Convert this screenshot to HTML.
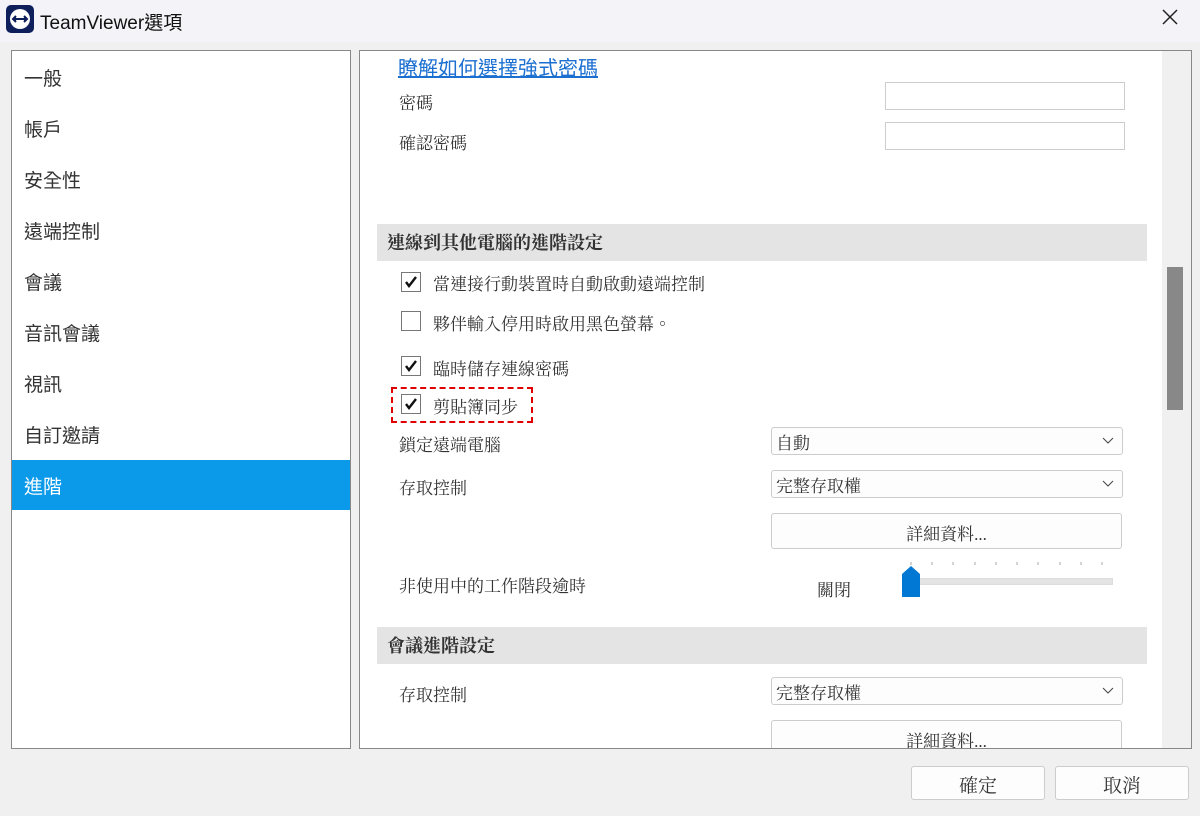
<!DOCTYPE html>
<html><head><meta charset="utf-8"><style>
*{margin:0;padding:0;box-sizing:border-box}
body{width:1200px;height:816px;background:#f0f0f0;position:relative;overflow:hidden;font-family:"Liberation Sans","Noto Sans CJK TC",sans-serif;color:#222}
.title{position:absolute;left:0;top:0;width:1200px;height:42px;background:#f3f3f8}
.abs{position:absolute}
.left{left:11px;top:50px;width:340px;height:699px;background:#fff;border:1px solid #888}
.nav{position:absolute;left:12px;font-size:19px;color:#333;font-family:"Liberation Sans","Noto Sans CJK TC",sans-serif}
.right{left:359px;top:50px;width:833px;height:699px;background:#fff;border:1px solid #888;overflow:hidden}
.s{font-family:"Liberation Serif","Noto Serif CJK TC","Noto Serif CJK SC",serif;font-size:17px;color:#333}
.hdr{position:absolute;left:17px;width:770px;height:37px;background:#e4e4e4;font-weight:bold;font-size:18px;padding:5px 0 0 10px}
.cb{position:absolute;width:20px;height:20px;border:1.5px solid #777;background:#fff}
.cb svg{position:absolute;left:1px;top:1px}
.inp{position:absolute;border:1px solid #ccc;background:#fff}
.sel{position:absolute;left:411px;width:352px;height:28px;border:1px solid #ccc;border-radius:3px;background:#fdfdfd;padding:1px 0 0 4px}
.sel svg{position:absolute;right:8px;top:9px}
.btn{position:absolute;border:1px solid #ccc;border-radius:3px;background:#fdfdfd;text-align:center}
</style></head><body>
<div class="title"></div>
<svg class="abs" style="left:6px;top:5px" width="28" height="28" viewBox="0 0 28 28"><rect width="28" height="28" rx="5" fill="#0e1f5b"/><circle cx="14" cy="14" r="10" fill="#fff"/><path d="M7 14h14M10 11l-3 3 3 3M18 11l3 3-3 3" stroke="#0e1f5b" stroke-width="2" fill="#0e1f5b"/></svg>
<div class="abs" style="left:40px;top:8px;font-size:19px;color:#111">TeamViewer選項</div>
<svg class="abs" style="left:1162px;top:9px" width="16" height="16"><path d="M1 1L15 15M15 1L1 15" stroke="#222" stroke-width="1.5"/></svg>
<div class="abs left">
<div class="nav" style="top:13px">一般</div>
<div class="nav" style="top:64px">帳戶</div>
<div class="nav" style="top:115px">安全性</div>
<div class="nav" style="top:166px">遠端控制</div>
<div class="nav" style="top:217px">會議</div>
<div class="nav" style="top:268px">音訊會議</div>
<div class="nav" style="top:319px">視訊</div>
<div class="nav" style="top:370px">自訂邀請</div>
<div class="abs" style="left:0;top:409px;width:338px;height:50px;background:#0b9aea"></div>
<div class="nav" style="top:421px;color:#fff">進階</div>
</div>
<div class="abs right s">
<div class="abs" style="left:38px;top:1px;font-size:20px;color:#1a6fd0;text-decoration:underline;font-family:'Liberation Sans','Noto Sans CJK TC',sans-serif">瞭解如何選擇強式密碼</div>
<div class="abs" style="left:39px;top:38px">密碼</div>
<div class="inp" style="left:525px;top:31px;width:240px;height:28px"></div>
<div class="abs" style="left:39px;top:78px">確認密碼</div>
<div class="inp" style="left:525px;top:71px;width:240px;height:28px"></div>
<div class="hdr" style="top:173px">連線到其他電腦的進階設定</div>
<div class="cb" style="left:41px;top:221px"><svg width="16" height="16"><path d="M3 8l3 4 7-9" stroke="#111" stroke-width="2.4" fill="none"/></svg></div>
<div class="abs" style="left:73px;top:219px">當連接行動裝置時自動啟動遠端控制</div>
<div class="cb" style="left:41px;top:260px"></div>
<div class="abs" style="left:73px;top:259px">夥伴輸入停用時啟用黑色螢幕。</div>
<div class="cb" style="left:41px;top:305px"><svg width="16" height="16"><path d="M3 8l3 4 7-9" stroke="#111" stroke-width="2.4" fill="none"/></svg></div>
<div class="abs" style="left:73px;top:304px">臨時儲存連線密碼</div>
<div class="abs" style="left:31px;top:336px;width:142px;height:36px;border:2.5px dashed #e00000"></div>
<div class="cb" style="left:41px;top:343px"><svg width="16" height="16"><path d="M3 8l3 4 7-9" stroke="#111" stroke-width="2.4" fill="none"/></svg></div>
<div class="abs" style="left:73px;top:342px">剪貼簿同步</div>
<div class="abs" style="left:39px;top:380px">鎖定遠端電腦</div>
<div class="sel" style="top:376px">自動<svg width="12" height="8"><path d="M1 1l5 5 5-5" stroke="#444" fill="none"/></svg></div>
<div class="abs" style="left:39px;top:423px">存取控制</div>
<div class="sel" style="top:419px">完整存取權<svg width="12" height="8"><path d="M1 1l5 5 5-5" stroke="#444" fill="none"/></svg></div>
<div class="btn" style="left:411px;top:462px;width:351px;height:36px;padding-top:6px">詳細資料...</div>
<div class="abs" style="left:39px;top:521px">非使用中的工作階段逾時</div>
<div class="abs" style="left:457px;top:525px">關閉</div>
<div class="abs" style="left:553px;top:527px;width:200px;height:7px;background:#e4e4e4;border:1px solid #ddd"></div>
<svg class="abs" style="left:541px;top:509px" width="215" height="40"><g stroke="#aaa"><line x1="10" y1="2" x2="10" y2="5"/><line x1="31" y1="2" x2="31" y2="5"/><line x1="52" y1="2" x2="52" y2="5"/><line x1="74" y1="2" x2="74" y2="5"/><line x1="95" y1="2" x2="95" y2="5"/><line x1="116" y1="2" x2="116" y2="5"/><line x1="137" y1="2" x2="137" y2="5"/><line x1="159" y1="2" x2="159" y2="5"/><line x1="180" y1="2" x2="180" y2="5"/><line x1="201" y1="2" x2="201" y2="5"/></g><path d="M1 14l9-8 9 8v23H1z" fill="#0078d4"/></svg>
<div class="hdr" style="top:576px">會議進階設定</div>
<div class="abs" style="left:39px;top:630px">存取控制</div>
<div class="sel" style="top:626px">完整存取權<svg width="12" height="8"><path d="M1 1l5 5 5-5" stroke="#444" fill="none"/></svg></div>
<div class="btn" style="left:411px;top:669px;width:351px;height:36px;padding-top:6px">詳細資料...</div>
<div class="abs" style="left:802px;top:0;width:31px;height:699px;background:#f0f0f0"></div>
<div class="abs" style="left:807px;top:216px;width:16px;height:143px;background:#888"></div>
</div>
<div class="btn s" style="left:911px;top:766px;width:134px;height:34px;padding-top:4px;font-size:19px">確定</div>
<div class="btn s" style="left:1055px;top:766px;width:134px;height:34px;padding-top:4px;font-size:19px">取消</div>
</body></html>
